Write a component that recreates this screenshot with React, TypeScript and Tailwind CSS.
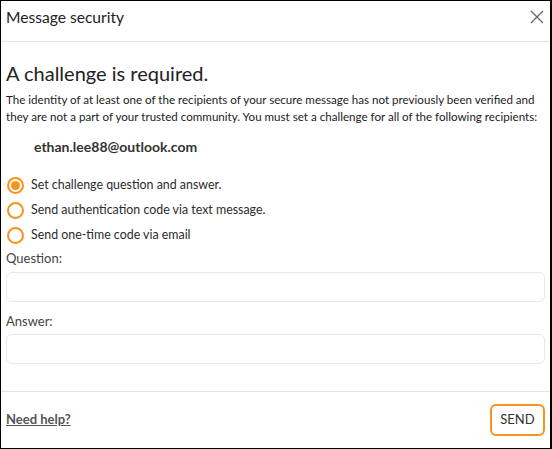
import React from "react";

function Radio({ checked, label }: { checked?: boolean; label: string }) {
  return (
    <div className="flex items-center h-[25px]">
      <span className="w-[17px] h-[17px] rounded-full border-2 border-[#f7941d] flex items-center justify-center ml-[6px] mr-[7px] shrink-0">
        {checked && <span className="w-[9px] h-[9px] rounded-full bg-[#f7941d]" />}
      </span>
      <span className="text-[12.4px] text-[#2b2b2b]">{label}</span>
    </div>
  );
}

export default function App() {
  return (
    <div
      className="w-[552px] h-[449px] bg-white border-t border-l border-b border-r-2 border-black flex flex-col text-[#222]"
      style={{ fontFamily: "Lato, 'Noto Sans', sans-serif" }}
    >
      <div className="h-[41px] border-b border-[#e3e3e3] flex items-start justify-between pl-[5px] pr-[6px] pt-[6px] shrink-0">
        <span className="text-[15.6px] leading-[20px] text-[#222]">Message security</span>
        <svg width="14" height="14" viewBox="0 0 14 14" className="text-[#666] mt-[3px]">
          <path d="M1 1L13 13M13 1L1 13" stroke="currentColor" strokeWidth="1.3" />
        </svg>
      </div>
      <div className="flex-1 px-[5px] pt-[18px]">
        <div className="text-[20px] leading-[26px] text-[#222]">A challenge is required.</div>
        <p className="text-[11.6px] leading-[17px] mt-[5px] text-[#222]">
          The identity of at least one of the recipients of your secure message has not previously been verified and they are not a part of your trusted community. You must set a challenge for all of the following recipients:
        </p>
        <div className="text-[14px] font-bold mt-[11px] pl-[28px] text-[#333]">ethan.lee88@outlook.com</div>
        <div className="mt-[16px] -ml-[5px] flex flex-col">
          <Radio checked label="Set challenge question and answer." />
          <Radio label="Send authentication code via text message." />
          <Radio label="Send one-time code via email" />
        </div>
        <div className="text-[13px] text-[#444] mt-[1px]">Question:</div>
        <div className="h-[30px] mt-[3px] border border-[#e8e8e8] rounded-[6px]" />
        <div className="text-[13px] text-[#444] mt-[10px]">Answer:</div>
        <div className="h-[30px] mt-[3px] border border-[#e8e8e8] rounded-[6px]" />
      </div>
      <div className="h-[57px] border-t border-[#e3e3e3] flex items-center justify-between pl-[5px] pr-[5px] shrink-0">
        <a className="text-[13px] font-bold underline text-[#555]">Need help?</a>
        <button className="w-[55px] h-[32px] border-2 border-[#f7941d] rounded-[6px] text-[13px] text-[#333]">SEND</button>
      </div>
    </div>
  );
}
